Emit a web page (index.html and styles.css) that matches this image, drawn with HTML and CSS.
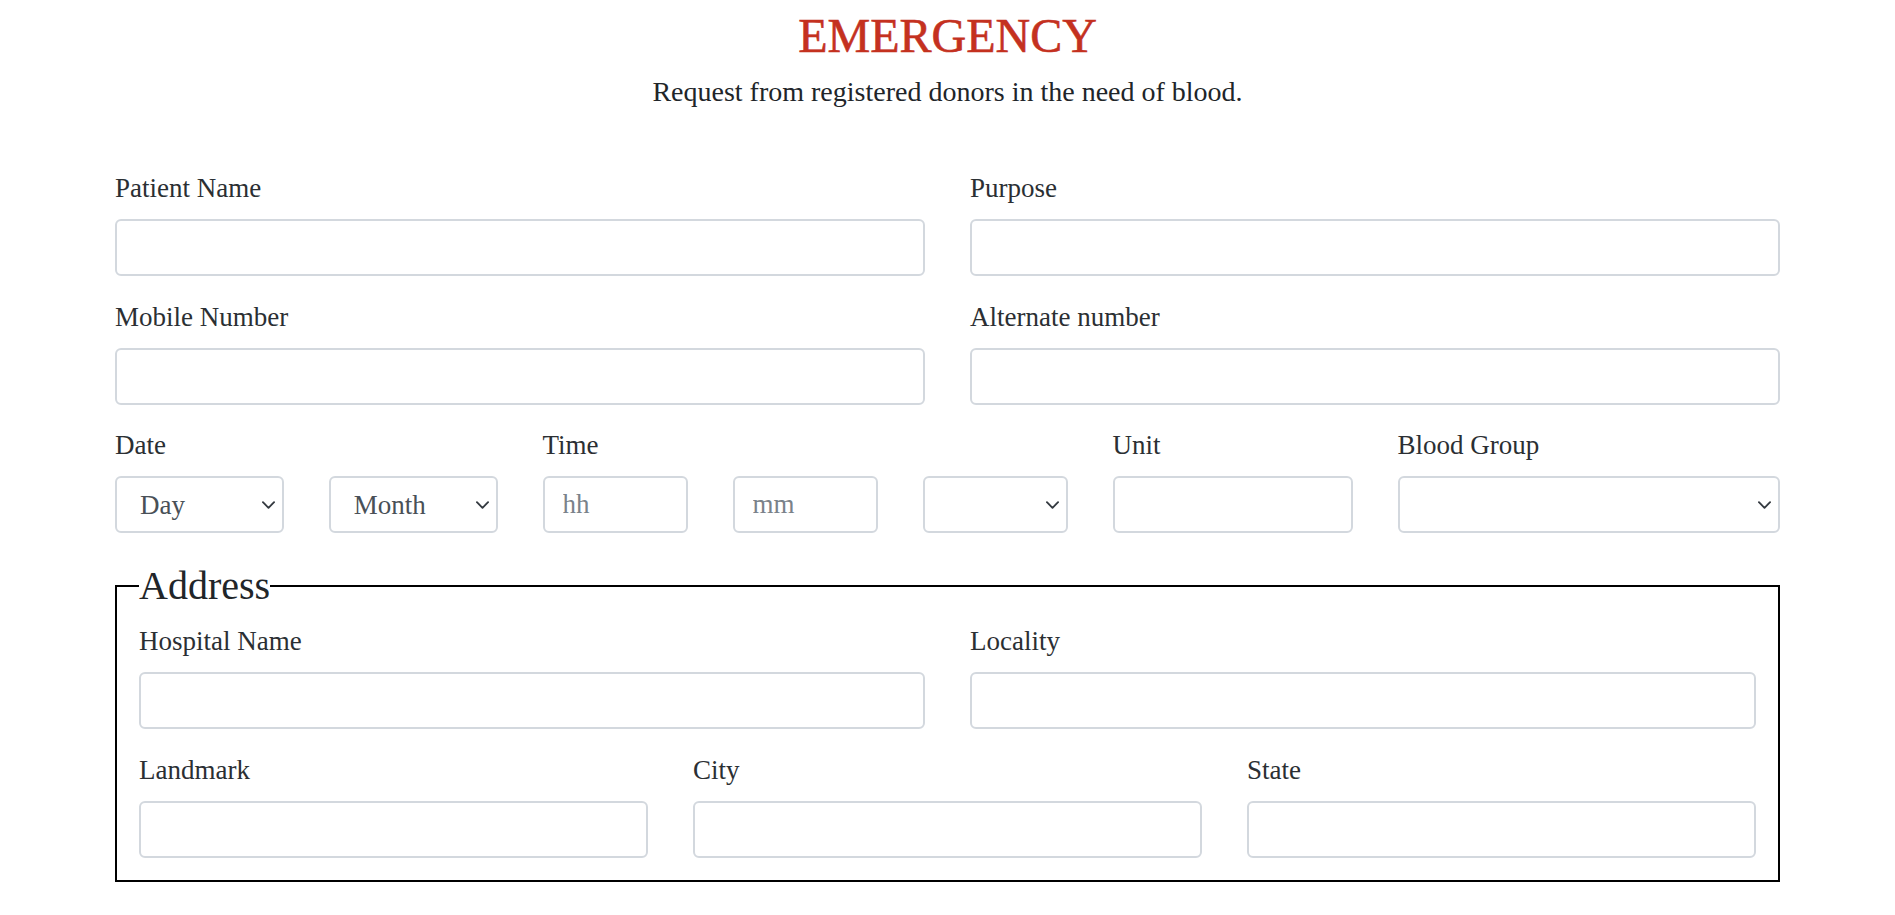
FILE: index.html
```html
<!DOCTYPE html>
<html lang="en">
<head>
<meta charset="utf-8">
<title>Emergency</title>
<link rel="stylesheet" href="styles.css">
</head>
<body>
<main class="page">
  <header class="intro">
    <h1 class="title">EMERGENCY</h1>
    <p class="lead">Request from registered donors in the need of blood.</p>
  </header>
  <form class="form">
    <div class="grid grid-2">
      <div class="field">
        <label class="label" for="patient">Patient Name</label>
        <input class="control" id="patient" type="text">
      </div>
      <div class="field">
        <label class="label" for="purpose">Purpose</label>
        <input class="control" id="purpose" type="text">
      </div>
    </div>
    <div class="grid grid-2">
      <div class="field">
        <label class="label" for="mobile">Mobile Number</label>
        <input class="control" id="mobile" type="text">
      </div>
      <div class="field">
        <label class="label" for="alt">Alternate number</label>
        <input class="control" id="alt" type="text">
      </div>
    </div>
    <div class="grid grid-12">
      <div class="field span-3">
        <label class="label" for="day">Date</label>
        <div class="sub sub-2">
          <select class="control select" id="day"><option>Day</option></select>
          <select class="control select"><option>Month</option></select>
        </div>
      </div>
      <div class="field span-4">
        <label class="label" for="hh">Time</label>
        <div class="sub sub-3">
          <input class="control" id="hh" type="text" placeholder="hh">
          <input class="control" type="text" placeholder="mm">
          <select class="control select"><option></option></select>
        </div>
      </div>
      <div class="field span-2">
        <label class="label" for="unit">Unit</label>
        <input class="control" id="unit" type="text">
      </div>
      <div class="field span-3">
        <label class="label" for="blood">Blood Group</label>
        <select class="control select" id="blood"><option></option></select>
      </div>
    </div>
    <fieldset class="address">
      <legend class="legend">Address</legend>
      <div class="address-body">
        <div class="grid grid-2">
          <div class="field">
            <label class="label" for="hospital">Hospital Name</label>
            <input class="control" id="hospital" type="text">
          </div>
          <div class="field">
            <label class="label" for="locality">Locality</label>
            <input class="control" id="locality" type="text">
          </div>
        </div>
        <div class="grid grid-3">
          <div class="field">
            <label class="label" for="landmark">Landmark</label>
            <input class="control" id="landmark" type="text">
          </div>
          <div class="field">
            <label class="label" for="city">City</label>
            <input class="control" id="city" type="text">
          </div>
          <div class="field">
            <label class="label" for="state">State</label>
            <input class="control" id="state" type="text">
          </div>
        </div>
      </div>
    </fieldset>
  </form>
</main>
</body>
</html>
```

FILE: styles.css
```css
* {
  box-sizing: border-box;
}

html, body {
  margin: 0;
  padding: 0;
  background: #ffffff;
}

body {
  font-family: "Liberation Serif", "Times New Roman", serif;
  color: #212529;
}

.page {
  width: 1665px;
  margin: 0 auto;
  padding-top: 7px;
}

.intro {
  text-align: center;
}

.title {
  margin: 0;
  font-size: 48px;
  line-height: 58px;
  font-weight: 400;
  color: #c4311f;
  -webkit-text-stroke: 0.6px #c4311f;
}

.lead {
  margin: 6px 0 0;
  font-size: 28px;
  line-height: 42px;
  color: #212529;
}

.form {
  margin-top: 55px;
  display: flex;
  flex-direction: column;
  gap: 20.5px;
}

.grid {
  display: grid;
  column-gap: 45px;
}

.grid-2 {
  grid-template-columns: 1fr 1fr;
}

.grid-3 {
  grid-template-columns: 1fr 1fr 1fr;
}

.grid-12 {
  grid-template-columns: repeat(12, 1fr);
}

.span-2 { grid-column: span 2; }
.span-3 { grid-column: span 3; }
.span-4 { grid-column: span 4; }

.field {
  display: flex;
  flex-direction: column;
  min-width: 0;
}

.label {
  display: block;
  font-size: 27px;
  line-height: 40px;
  margin-bottom: 11px;
  color: #2b2f33;
}

.sub {
  display: grid;
  column-gap: 45px;
}

.sub-2 {
  grid-template-columns: 1fr 1fr;
}

.sub-3 {
  grid-template-columns: 1fr 1fr 1fr;
}

.control {
  display: block;
  width: 100%;
  min-width: 0;
  height: 57px;
  margin: 0;
  padding: 0 18px;
  font-family: "Liberation Serif", "Times New Roman", serif;
  font-size: 27px;
  color: #495057;
  background-color: #ffffff;
  border: 2px solid #d3d8de;
  border-radius: 6px;
  outline: none;
}

.control::placeholder {
  color: #7a828a;
  opacity: 1;
}

.select {
  -webkit-appearance: none;
  appearance: none;
  padding: 0 36px 0 23px;
  background-image: url("data:image/svg+xml,%3Csvg xmlns='http://www.w3.org/2000/svg' viewBox='0 0 14 8'%3E%3Cpath d='M1 1l6 6 6-6' fill='none' stroke='%23343a40' stroke-width='2' stroke-linecap='round' stroke-linejoin='round'/%3E%3C/svg%3E");
  background-repeat: no-repeat;
  background-position: right 7px center;
  background-size: 13px 8px;
}

.address {
  margin: 8px 0 0;
  padding: 11px 22px 22.5px;
  border: 2px solid #000000;
  min-width: 0;
}

.legend {
  padding: 0;
  font-size: 40px;
  line-height: 48px;
  color: #212529;
}

.address-body {
  display: flex;
  flex-direction: column;
  gap: 21px;
}
```
